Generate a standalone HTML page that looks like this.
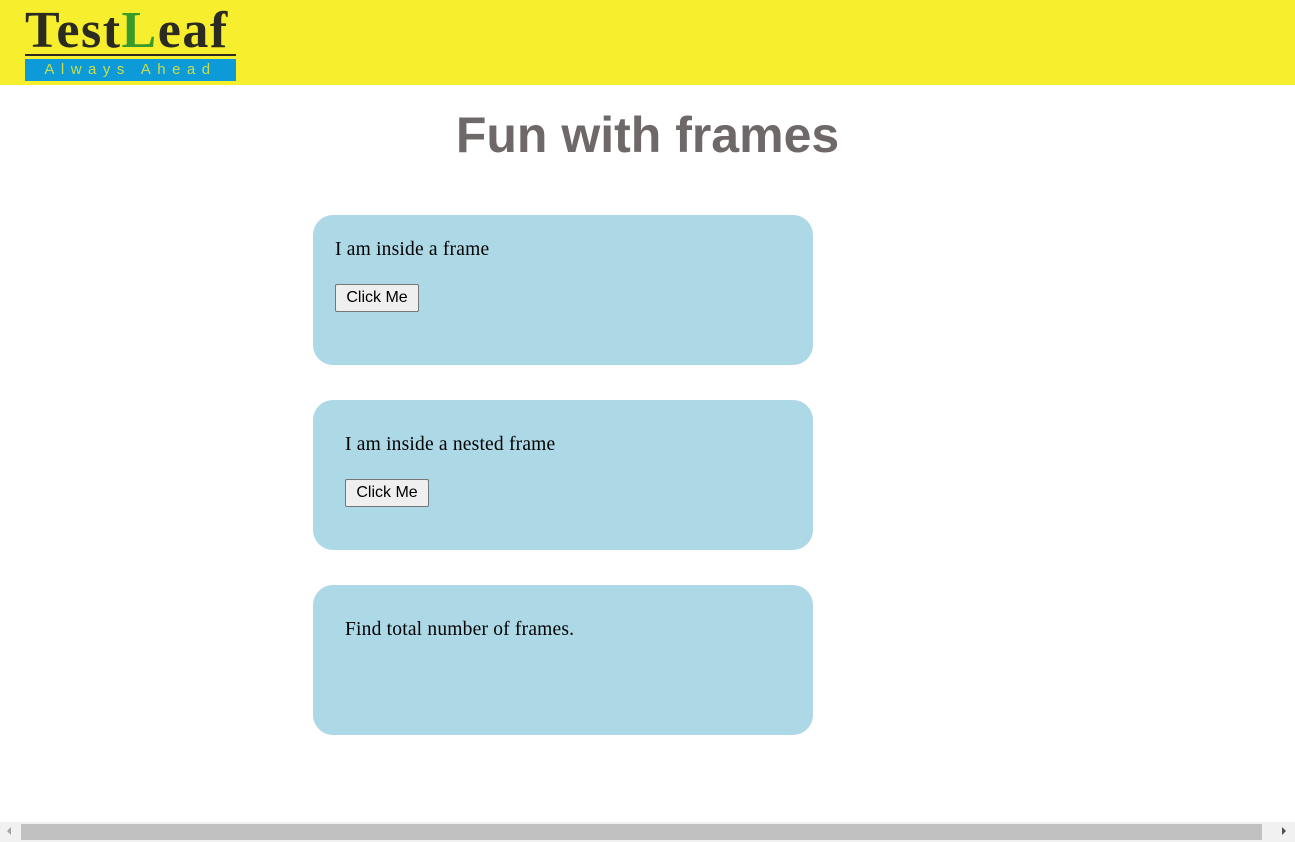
<!DOCTYPE html>
<html><head><style>
body{margin:0;width:1295px;height:842px;overflow:hidden;background:#fff;font-family:"Liberation Serif",serif;position:relative}
.hdr{position:absolute;left:0;top:0;width:1295px;height:85px;background:#f7ef2d}
.logo{position:absolute;left:25px;top:2px;width:211px;height:79px}
.lt{position:absolute;left:0;top:4px;font-family:"Liberation Serif",serif;font-size:52px;color:#2b2b22;letter-spacing:1.5px;line-height:50px;font-weight:bold}
.line{position:absolute;left:0;top:52px;width:211px;height:2px;background:#2b2b22}
.band{position:absolute;left:0;top:57px;width:211px;height:22px;background:#0d9ad8;color:#c9dd4a;font-family:"Liberation Sans",sans-serif;font-size:15px;letter-spacing:6.5px;text-align:center;line-height:22px}
h1{position:absolute;left:0;width:1295px;top:106px;margin:0;text-align:center;font-family:"Liberation Sans",sans-serif;font-size:50px;font-weight:bold;color:#6f6868;line-height:58px}
.box{position:absolute;left:313px;width:500px;height:150px;background:#add8e6;border-radius:20px}
.t{position:absolute;font-size:19.5px;color:#000;line-height:22px;letter-spacing:0.2px}
button{position:absolute;font-family:"Liberation Sans",sans-serif;font-size:16px;padding:0;width:84px;height:28px;background:#efefef;border:1px solid #767676;border-radius:2px;color:#000}
.sb{position:absolute;left:0;top:822px;width:1295px;height:20px;background:#f1f1f1}
.th{position:absolute;left:21px;top:824px;width:1241px;height:16px;background:#c1c1c1}
</style></head><body>
<div class="hdr"><div class="logo">
<div class="lt">Test<span style="color:#3a9a2a">L</span>eaf</div>
<div class="line"></div>
<div class="band">Always Ahead</div></div></div>
<h1>Fun with frames</h1>
<div class="box" style="top:215px"><div class="t" style="left:22px;top:24px">I am inside a frame</div><button style="left:22px;top:69px">Click Me</button></div>
<div class="box" style="top:400px"><div class="t" style="left:32px;top:34px">I am inside a nested frame</div><button style="left:32px;top:79px">Click Me</button></div>
<div class="box" style="top:585px"><div class="t" style="left:32px;top:34px">Find total number of frames.</div></div>
<div class="sb"></div><div class="th"></div>
<div style="position:absolute;left:7px;top:827px;width:0;height:0;border-top:4px solid transparent;border-bottom:4px solid transparent;border-right:4px solid #a3a3a3"></div>
<div style="position:absolute;left:1282px;top:827px;width:0;height:0;border-top:4px solid transparent;border-bottom:4px solid transparent;border-left:4px solid #505050"></div>
</body></html>
